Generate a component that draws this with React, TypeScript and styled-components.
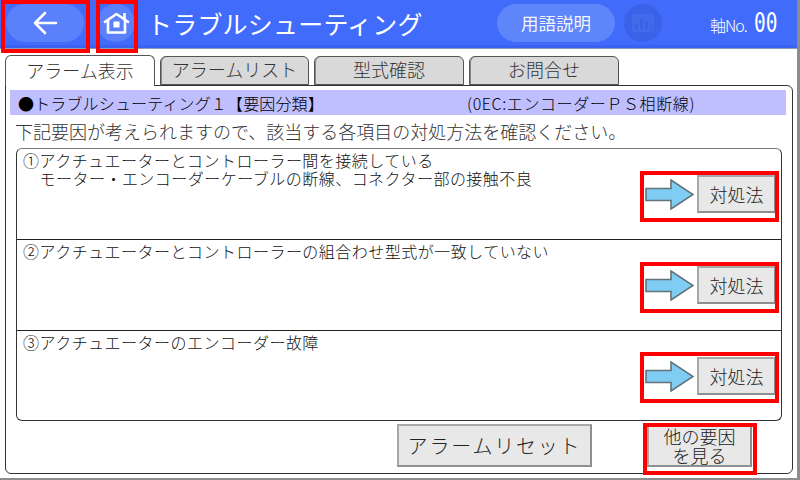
import React from 'react';
import styled, { createGlobalStyle } from 'styled-components';

const GlobalStyle = createGlobalStyle`
  html, body { margin: 0; padding: 0; background: #ffffff; }
  * { box-sizing: border-box; }
  body { font-family: "Noto Sans CJK JP", "Liberation Sans", sans-serif; font-weight: 300; }
`;

const Screen = styled.div`
  width: 800px;
  height: 480px;
  display: flex;
  flex-direction: column;
  overflow: hidden;
  background: #ffffff;
  border-right: 3px solid #8c8c8c;
  border-bottom: 2px solid #8c8c8c;
`;

const Header = styled.header`
  height: 49px;
  flex: none;
  display: flex;
  align-items: center;
  background: #416bfb;
  border-bottom: 1px solid #8f9bb8;
  box-shadow: inset 0 -3px 0 #3a62f0;
  color: #fff;
  padding-bottom: 3px;
`;

const BackPill = styled.div`
  width: 78px;
  height: 38px;
  margin-left: 6px;
  border-radius: 19px;
  background: #5a80fb;
  display: flex;
  align-items: center;
  justify-content: center;
`;

const HomeDisc = styled.div`
  width: 38px;
  height: 38px;
  margin-left: 13px;
  border-radius: 50%;
  background: #5a80fb;
  display: flex;
  align-items: center;
  justify-content: center;
`;

const HeaderTitle = styled.h1`
  margin: 0 0 0 12px;
  width: 350px;
  font-size: 25px;
  font-weight: 400;
  line-height: 38px;
  letter-spacing: 0.2px;
  white-space: nowrap;
`;

const GlossaryPill = styled.div`
  width: 118px;
  height: 38px;
  border-radius: 19px;
  background: #5f85fb;
  display: flex;
  align-items: center;
  justify-content: center;
  font-size: 17.5px;
  font-weight: 400;
  color: #f2f5ff;
`;

const ChartDisc = styled.div`
  width: 38px;
  height: 38px;
  margin-left: 9px;
  border-radius: 50%;
  background: #3a62e6;
  display: flex;
  align-items: center;
  justify-content: center;
`;

const AxisLabel = styled.div`
  margin-left: 48px;
  display: flex;
  align-items: baseline;
  font-size: 16px;
  letter-spacing: -1px;
`;

const AxisValue = styled.span`
  margin-left: 7px;
  font-family: "DejaVu Sans Mono", monospace;
  font-size: 26px;
  line-height: 30px;
  transform: scaleX(0.75);
  transform-origin: left center;
  letter-spacing: 0;
`;

const Body = styled.main`
  flex: 1;
  display: flex;
  flex-direction: column;
  padding: 5px 4px 4px 5px;
  min-height: 0;
`;

const TabBar = styled.div`
  height: 31px;
  flex: none;
  display: flex;
  align-items: flex-end;
  gap: 5px;
  position: relative;
  z-index: 1;
`;

const Tab = styled.div<{ $active?: boolean; $width: number }>`
  width: ${p => p.$width}px;
  height: ${p => (p.$active ? 31 : 29)}px;
  margin-bottom: ${p => (p.$active ? -1 : 0)}px;
  border: 1px solid #555;
  border-bottom: ${p => (p.$active ? 'none' : '1px solid #555')};
  border-radius: 6px 6px 0 0;
  background: ${p => (p.$active ? '#ffffff' : '#d9d9d9')};
  display: flex;
  align-items: center;
  justify-content: center;
  padding-bottom: 3px;
  font-size: 18px;
  color: #333;
  box-shadow: ${p => (p.$active ? 'none' : 'inset 1px 0 0 #888')};
`;

const Panel = styled.section`
  flex: 1;
  min-height: 0;
  border: 1px solid #333;
  border-radius: 0 6px 6px 6px;
  padding: 4px 6px 0 4px;
  display: flex;
  flex-direction: column;
`;

const Banner = styled.div`
  height: 25px;
  flex: none;
  background: #bfbfff;
  display: flex;
  align-items: center;
  padding-left: 8px;
  font-size: 16px;
  color: #000;
  white-space: nowrap;
`;

const BannerTitle = styled.span`
  width: 449px;
  letter-spacing: 0.15px;
`;

const BannerCode = styled.span`
  letter-spacing: 0.6px;
`;

const Lead = styled.p`
  margin: 5px 0 0 5px;
  font-size: 18px;
  line-height: 22px;
  color: #333;
  white-space: nowrap;
`;

const CauseList = styled.div`
  margin: 6px 4px 0 6px;
  height: 273px;
  flex: none;
  border: 1px solid #333;
  border-top-color: #777;
  border-radius: 6px;
  display: flex;
  flex-direction: column;
`;

const CauseRow = styled.div<{ $height: number }>`
  height: ${p => p.$height}px;
  flex: none;
  position: relative;
  display: flex;
  justify-content: space-between;
  padding: 2px 5px 0 6px;
  & + & { border-top: 1px solid #222; }
`;

const CauseText = styled.div`
  font-size: 16px;
  line-height: 18px;
  letter-spacing: 0.48px;
  color: #111;
  white-space: pre;
`;

const CauseAction = styled.div`
  position: absolute;
  right: 5px;
  top: 26px;
  display: flex;
  align-items: center;
  gap: 3px;
`;

const SoftButton = styled.div`
  background: #e8e8e8;
  border: 2px solid #8f8f8f;
  border-top-color: #a8a8a8;
  border-left-color: #a8a8a8;
  color: #222;
  display: flex;
  align-items: center;
  justify-content: center;
  text-align: center;
`;

const RemedyButton = styled(SoftButton)`
  width: 79px;
  height: 38px;
  font-size: 18px;
`;

const Footer = styled.div`
  flex: 1;
  display: flex;
  align-items: flex-start;
  padding: 3px 0 0 387px;
`;

const ResetButton = styled(SoftButton)`
  width: 195px;
  height: 43px;
  font-size: 20px;
  letter-spacing: 1.8px;
`;

const MoreButton = styled(SoftButton)`
  width: 105px;
  height: 43px;
  margin-left: 55px;
  font-size: 18px;
  line-height: 19px;
`;

const Highlight = styled.span<{ $l: number; $t: number; $w: number; $h: number }>`
  position: absolute;
  left: ${p => p.$l}px;
  top: ${p => p.$t}px;
  width: ${p => p.$w}px;
  height: ${p => p.$h}px;
  border: 4px solid #ff0000;
  pointer-events: none;
  z-index: 5;
`;

const BackIcon = () => (
  <svg width="26" height="26" viewBox="0 0 26 26" fill="none" stroke="#fff" strokeWidth="2.6" strokeLinecap="round" strokeLinejoin="round">
    <path d="M24 13H3M13 3L3 13l10 10" />
  </svg>
);

const HomeIcon = () => (
  <svg width="27" height="22" viewBox="0 0 27 22" fill="none" stroke="#fff" strokeWidth="2.6" strokeLinejoin="round">
    <path d="M1 10.5L13.5 2 26 10.5" />
    <path d="M5 8V20.5H22V8" />
    <path d="M21.5 1v6" />
    <rect x="10.5" y="9.5" width="6" height="6" fill="#fff" stroke="none" />
  </svg>
);

const ChartIcon = () => (
  <svg width="22" height="18" viewBox="0 0 22 18">
    <rect x="0" y="0" width="22" height="18" rx="2" fill="#426bec" />
    <rect x="3" y="9" width="3" height="7" fill="#3a62e6" />
    <rect x="8" y="4" width="3" height="12" fill="#3a62e6" />
    <rect x="13" y="7" width="3" height="9" fill="#3a62e6" />
    <rect x="18" y="10" width="2" height="6" fill="#3a62e6" />
  </svg>
);

const ArrowIcon = () => (
  <svg width="49" height="31" viewBox="0 0 49 31" style={{ display: 'block' }}>
    <path d="M1 9.5H26V1L48 15.5 26 30V21.5H1Z" fill="#7fcdf2" stroke="#62737c" strokeWidth="1.6" />
  </svg>
);

const causes = [
  { height: 90, text: '①アクチュエーターとコントローラー間を接続している\n　モーター・エンコーダーケーブルの断線、コネクター部の接触不良' },
  { height: 91, text: '②アクチュエーターとコントローラーの組合わせ型式が一致していない' },
  { height: 90, text: '③アクチュエーターのエンコーダー故障' },
];

const tabs = [
  { label: 'アラーム表示', width: 150, active: true },
  { label: 'アラームリスト', width: 149 },
  { label: '型式確認', width: 150 },
  { label: 'お問合せ', width: 150 },
];

export default function App() {
  return (
    <>
      <GlobalStyle />
      <Screen>
        <Header>
          <BackPill><BackIcon /></BackPill>
          <HomeDisc><HomeIcon /></HomeDisc>
          <HeaderTitle>トラブルシューティング</HeaderTitle>
          <GlossaryPill>用語説明</GlossaryPill>
          <ChartDisc><ChartIcon /></ChartDisc>
          <AxisLabel>軸No.<AxisValue>00</AxisValue></AxisLabel>
        </Header>
        <Body>
          <TabBar>
            {tabs.map(t => (
              <Tab key={t.label} $active={t.active} $width={t.width}>{t.label}</Tab>
            ))}
          </TabBar>
          <Panel>
            <Banner>
              <BannerTitle>●トラブルシューティング１【要因分類】</BannerTitle>
              <BannerCode>(0EC:エンコーダーＰＳ相断線)</BannerCode>
            </Banner>
            <Lead>下記要因が考えられますので、該当する各項目の対処方法を確認ください。</Lead>
            <CauseList>
              {causes.map(c => (
                <CauseRow key={c.text} $height={c.height}>
                  <CauseText>{c.text}</CauseText>
                  <CauseAction>
                    <ArrowIcon />
                    <RemedyButton>対処法</RemedyButton>
                  </CauseAction>
                </CauseRow>
              ))}
            </CauseList>
            <Footer>
              <ResetButton>アラームリセット</ResetButton>
              <MoreButton>他の要因<br />を見る</MoreButton>
            </Footer>
          </Panel>
        </Body>
      </Screen>
      <Highlight $l={1} $t={0} $w={89} $h={53} />
      <Highlight $l={96} $t={0} $w={42} $h={53} />
      <Highlight $l={640} $t={171} $w={139} $h={51} />
      <Highlight $l={640} $t={262} $w={139} $h={51} />
      <Highlight $l={640} $t={352} $w={139} $h={51} />
      <Highlight $l={643} $t={423} $w={114} $h={52} />
    </>
  );
}
